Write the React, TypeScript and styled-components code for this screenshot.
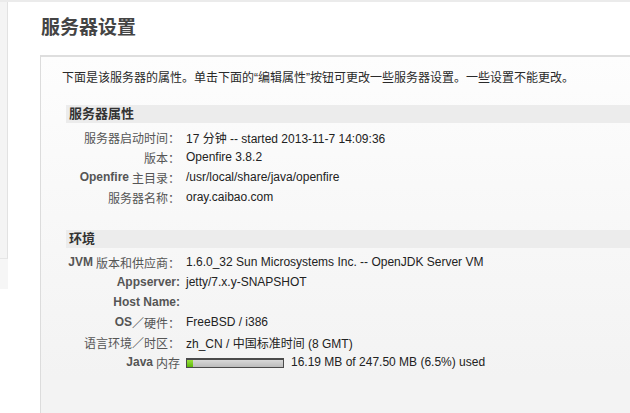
import React from "react";
import styled, { createGlobalStyle } from "styled-components";

const GlobalStyle = createGlobalStyle`
  html, body {
    margin: 0;
    padding: 0;
    background: #fff;
    overflow: hidden;
  }
  body {
    font-family: "Liberation Sans", "Noto Sans CJK SC", sans-serif;
    font-size: 12px;
    color: #333;
  }
`;

const Page = styled.div`
  box-sizing: border-box;
  display: flex;
  height: 100vh;
  overflow: hidden;
  border-top: 2px solid #ebebeb;
`;

const Rail = styled.div`
  width: 8px;
  flex-shrink: 0;
  display: flex;
  flex-direction: column;
`;

const RailPanel = styled.div`
  height: 256px;
  background: #f4f4f4;
  border-right: 1px solid #e2e2e2;
  border-bottom: 1px solid #e6e6e6;
`;

const RailFoot = styled.div`
  height: 30px;
  background: #f6f6f6;
`;

const Main = styled.div`
  flex: 1;
  min-width: 0;
  display: flex;
  flex-direction: column;
  padding-left: 32px;
`;

const Title = styled.h1`
  box-sizing: border-box;
  flex-shrink: 0;
  height: 53px;
  margin: 0;
  padding: 13px 0 0 1px;
  font-size: 19px;
  line-height: 26px;
  font-weight: bold;
  color: #444;
`;

const Box = styled.div`
  flex: 1;
  padding: 12px 0 0 21px;
  border-top: 2px solid #dedede;
  border-left: 1px solid #dcdcdc;
  background: linear-gradient(#fdfdfd, #f3f3f3 320px);
`;

const Intro = styled.p`
  margin: 0;
  line-height: 18px;
  color: #2a2a2a;
`;

const Section = styled.section`
  margin: 18px 0 0 4px;
  & + & {
    margin-top: 23px;
  }
`;

const SectionHead = styled.div`
  height: 18px;
  padding-left: 3px;
  line-height: 18px;
  background: #ececec;
  font-size: 13px;
  font-weight: bold;
  color: #333;
`;

const Rows = styled.div`
  display: grid;
  grid-template-columns: 114px 1fr;
  column-gap: 6px;
  padding-top: 4px;
`;

const Label = styled.div`
  height: 20px;
  display: flex;
  align-items: center;
  justify-content: flex-end;
  white-space: nowrap;
  color: #555;
`;

const B = styled.b`
  font-weight: bold;
  margin-right: ${(p: { $gap?: boolean }) => (p.$gap ? "3px" : "0")};
`;

const Value = styled.div`
  height: 20px;
  display: flex;
  align-items: center;
  gap: 7px;
  white-space: nowrap;
  color: #222;
`;

const Meter = styled.div`
  box-sizing: border-box;
  width: 98px;
  height: 10px;
  margin-top: 1px;
  border: 1px solid #4a4a4a;
  border-top-width: 2px;
  background: linear-gradient(#d8d8d8, #bcbcbc);
`;

const MeterFill = styled.div`
  height: 100%;
  background: linear-gradient(#9be23c, #5cb70c);
`;

type Row = { label: React.ReactNode; value: React.ReactNode };

const serverRows: Row[] = [
  { label: "服务器启动时间：", value: "17 分钟 -- started 2013-11-7 14:09:36" },
  { label: "版本：", value: "Openfire 3.8.2" },
  {
    label: (
      <>
        <B $gap>Openfire</B>主目录：
      </>
    ),
    value: "/usr/local/share/java/openfire",
  },
  { label: "服务器名称：", value: "oray.caibao.com" },
];

const used = 16.19;
const total = 247.5;
const pct = (used / total) * 100;

const envRows: Row[] = [
  {
    label: (
      <>
        <B $gap>JVM</B>版本和供应商：
      </>
    ),
    value: "1.6.0_32 Sun Microsystems Inc. -- OpenJDK Server VM",
  },
  { label: <B>Appserver:</B>, value: "jetty/7.x.y-SNAPSHOT" },
  { label: <B>Host Name:</B>, value: "" },
  {
    label: (
      <>
        <B>OS</B>／硬件：
      </>
    ),
    value: "FreeBSD / i386",
  },
  { label: "语言环境／时区：", value: "zh_CN / 中国标准时间 (8 GMT)" },
  {
    label: (
      <>
        <B $gap>Java</B>内存
      </>
    ),
    value: (
      <>
        <Meter>
          <MeterFill style={{ width: `${pct}%` }} />
        </Meter>
        <span>
          {used.toFixed(2)} MB of {total.toFixed(2)} MB ({pct.toFixed(1)}%) used
        </span>
      </>
    ),
  },
];

const PropSection = ({ title, rows }: { title: string; rows: Row[] }) => (
  <Section>
    <SectionHead>{title}</SectionHead>
    <Rows>
      {rows.map((r, i) => (
        <React.Fragment key={i}>
          <Label>{r.label}</Label>
          <Value>{r.value}</Value>
        </React.Fragment>
      ))}
    </Rows>
  </Section>
);

export default function App() {
  return (
    <>
      <GlobalStyle />
      <Page>
        <Rail>
          <RailPanel />
          <RailFoot />
        </Rail>
        <Main>
          <Title>服务器设置</Title>
          <Box>
            <Intro>
              下面是该服务器的属性。单击下面的“编辑属性”按钮可更改一些服务器设置。一些设置不能更改。
            </Intro>
            <PropSection title="服务器属性" rows={serverRows} />
            <PropSection title="环境" rows={envRows} />
          </Box>
        </Main>
      </Page>
    </>
  );
}
